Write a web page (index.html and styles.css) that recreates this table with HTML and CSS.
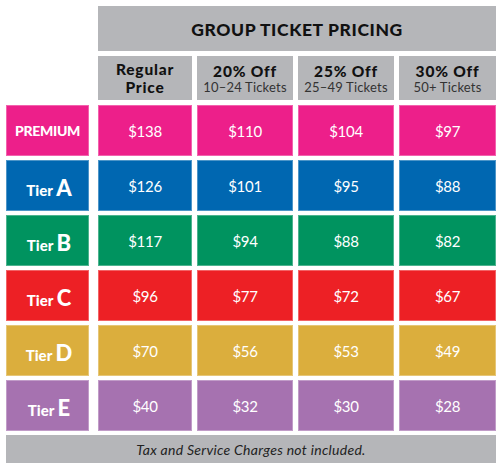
FILE: index.html
```html
<!DOCTYPE html>
<html lang="en">
<head>
    <meta charset="UTF-8">
    <title>Group Ticket Pricing</title>
    <link rel="stylesheet" href="styles.css">
</head>
<body>
    <div class="pricing">
        <div class="title">GROUP TICKET PRICING</div>

        <div class="blank"></div>
        <div class="head"><b>Regular<br>Price</b></div>
        <div class="head"><b>20% Off</b><span>10–24 Tickets</span></div>
        <div class="head"><b>25% Off</b><span>25–49 Tickets</span></div>
        <div class="head"><b>30% Off</b><span>50+ Tickets</span></div>

        <div class="cell label premium"><span class="prem">PREMIUM</span></div>
        <div class="cell premium">$138</div>
        <div class="cell premium">$110</div>
        <div class="cell premium">$104</div>
        <div class="cell premium">$97</div>

        <div class="cell label tier-a"><span>Tier <span class="letter">A</span></span></div>
        <div class="cell tier-a">$126</div>
        <div class="cell tier-a">$101</div>
        <div class="cell tier-a">$95</div>
        <div class="cell tier-a">$88</div>

        <div class="cell label tier-b"><span>Tier <span class="letter">B</span></span></div>
        <div class="cell tier-b">$117</div>
        <div class="cell tier-b">$94</div>
        <div class="cell tier-b">$88</div>
        <div class="cell tier-b">$82</div>

        <div class="cell label tier-c"><span>Tier <span class="letter">C</span></span></div>
        <div class="cell tier-c">$96</div>
        <div class="cell tier-c">$77</div>
        <div class="cell tier-c">$72</div>
        <div class="cell tier-c">$67</div>

        <div class="cell label tier-d"><span>Tier <span class="letter">D</span></span></div>
        <div class="cell tier-d">$70</div>
        <div class="cell tier-d">$56</div>
        <div class="cell tier-d">$53</div>
        <div class="cell tier-d">$49</div>

        <div class="cell label tier-e"><span>Tier <span class="letter">E</span></span></div>
        <div class="cell tier-e">$40</div>
        <div class="cell tier-e">$32</div>
        <div class="cell tier-e">$30</div>
        <div class="cell tier-e">$28</div>

        <div class="note">Tax and Service Charges not included.</div>
    </div>
</body>
</html>
```

FILE: styles.css
```css
body {
    margin: 0;
    padding: 6px;
    background: #fff;
    font-family: Lato, 'Open Sans', sans-serif;
}

.pricing {
    display: grid;
    grid-template-columns: 87px 94px 96px 96px 97px;
    grid-template-rows: 46px 45px repeat(6, 51px) 28px;
    column-gap: 5px;
    row-gap: 4px;
}

.title {
    grid-column: 2 / 6;
    margin-bottom: 1px;
    background: #b5b6b9;
    color: #111;
    font-weight: 900;
    font-size: 17.5px;
    letter-spacing: 0.6px;
    display: flex;
    align-items: center;
    justify-content: center;
    padding-top: 1px;
}

.head {
    margin-bottom: 1px;
    background: #b5b6b9;
    display: flex;
    flex-direction: column;
    align-items: center;
    justify-content: center;
    text-align: center;
    color: #111;
}
.head b {
    font-size: 15.5px;
    font-weight: 900;
    line-height: 18px;
    letter-spacing: 0.8px;
}
.head span {
    font-size: 13px;
    color: #333;
    line-height: 14px;
    letter-spacing: 0.2px;
}

/* Cellules de prix */
.cell {
    display: flex;
    align-items: center;
    justify-content: center;
    color: #fff;
    font-size: 15px;
    letter-spacing: -0.3px;
    box-shadow: inset 0 0 0 1px rgba(255,255,255,0.3);
}

.label {
    width: 83px;
    font-weight: 900;
    font-size: 15px;
    letter-spacing: 0;
    padding: 3px 0 0 3px;
    box-sizing: border-box;
}
.label .letter {
    font-size: 22px;
}
.prem {
    font-size: 14px;
    letter-spacing: -0.3px;
}
.label.premium {
    padding: 0;
}

.premium { background: #ed1f8a; }
.tier-a { background: #0067b1; }
.tier-b { background: #00935f; }
.tier-c { background: #ed2025; }
.tier-d { background: #dbae3d; }
.tier-e { background: #a672b0; }

/* Rodapé */
.note {
    grid-column: 1 / 6;
    background: #b5b6b9;
    color: #222;
    font-style: italic;
    font-size: 14px;
    letter-spacing: 0.3px;
    display: flex;
    align-items: center;
    justify-content: center;
}
```
